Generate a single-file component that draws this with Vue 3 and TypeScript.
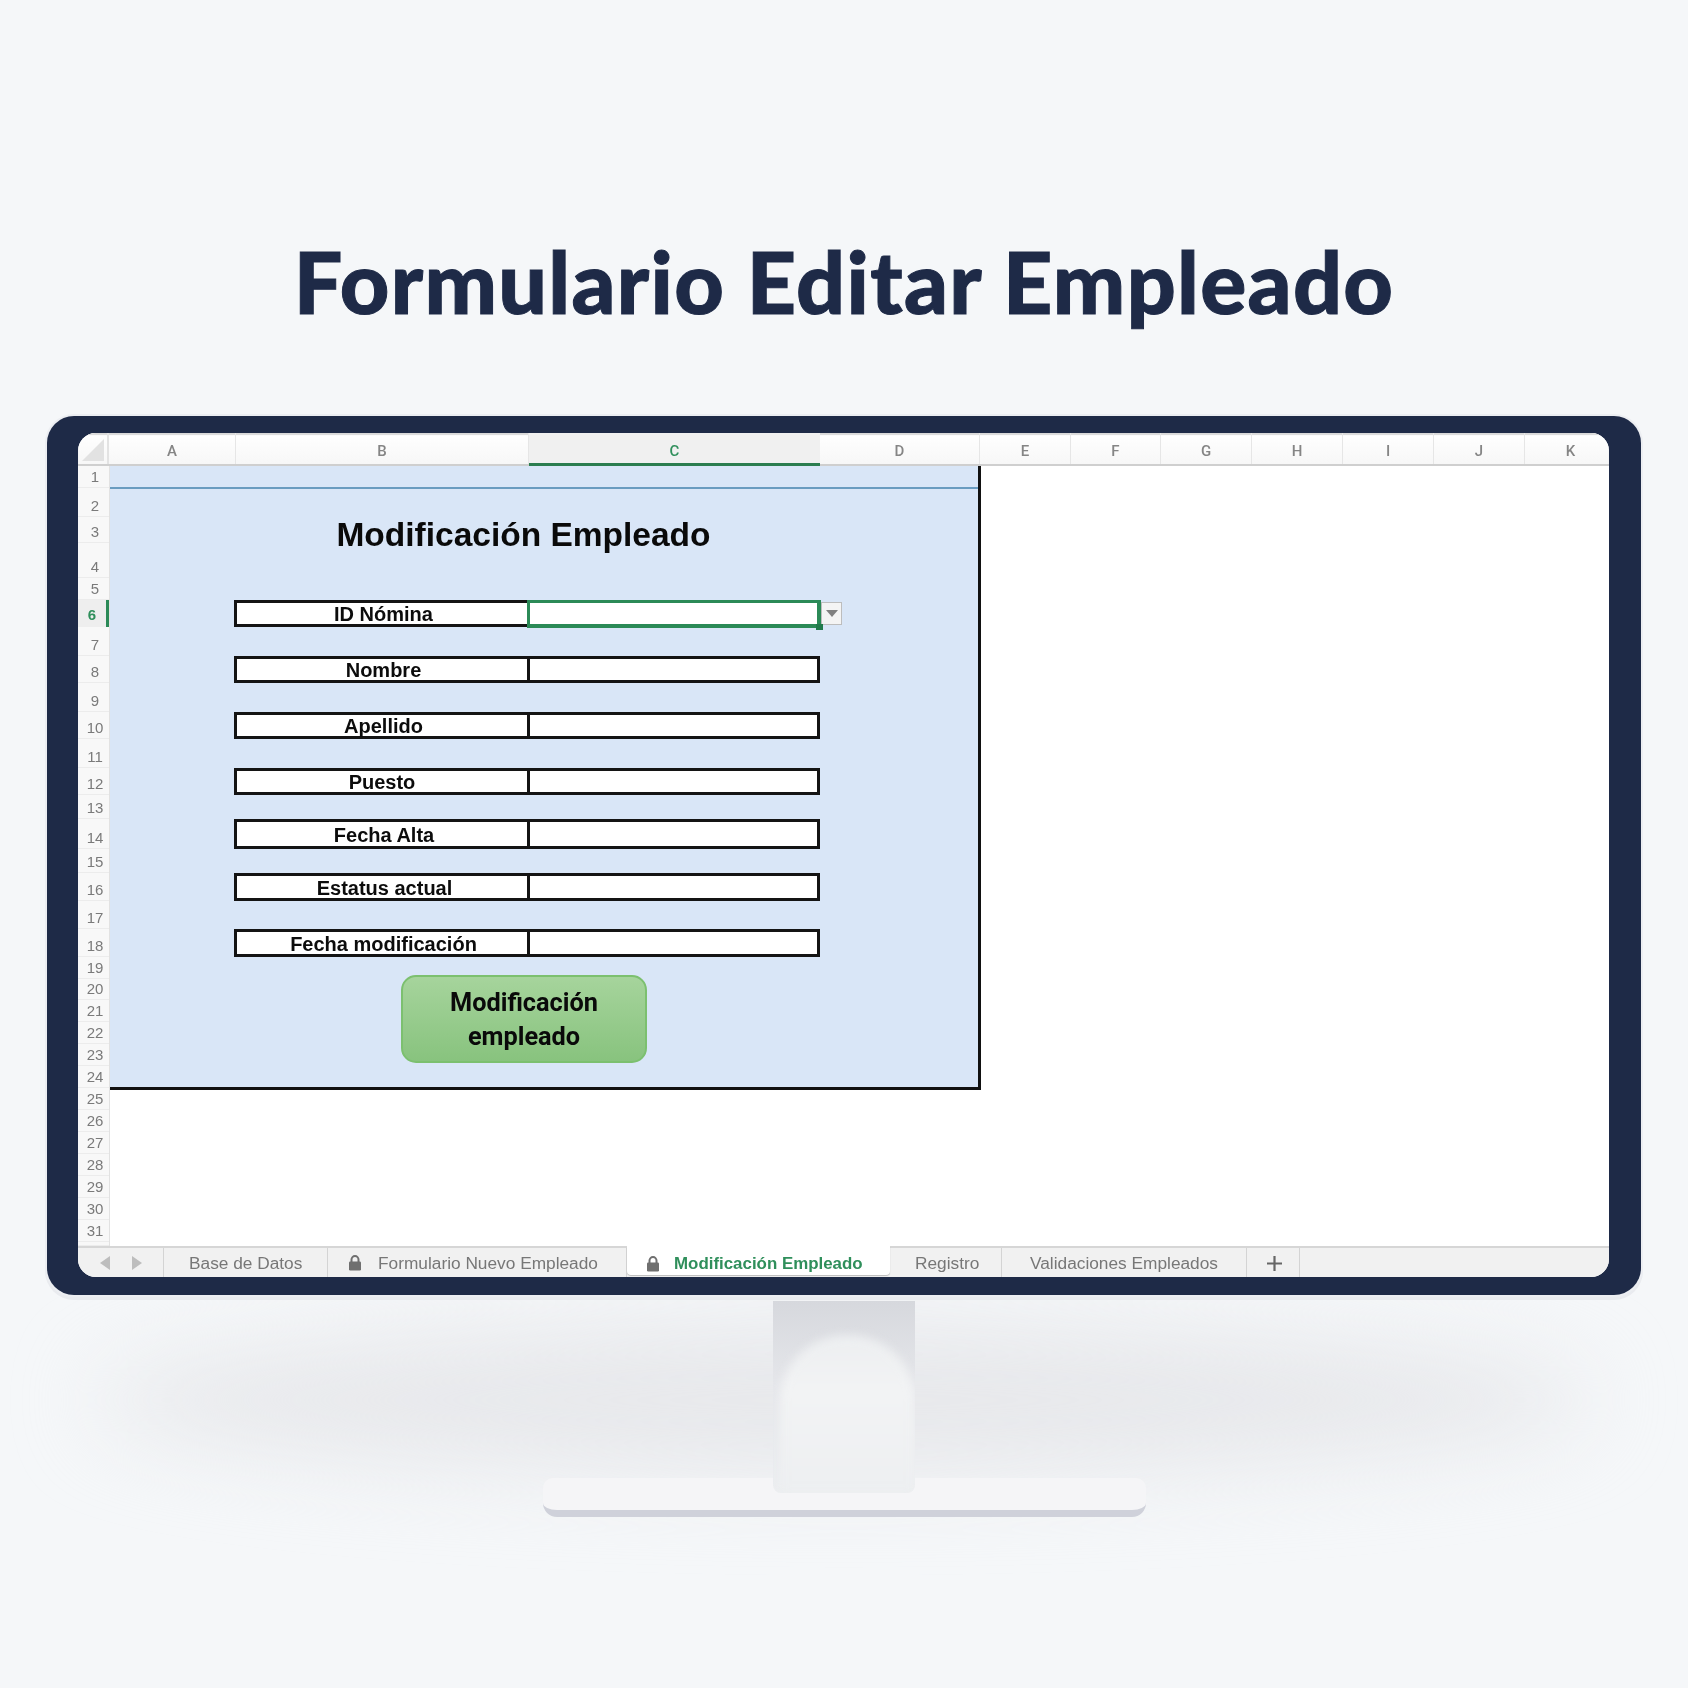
<script setup lang="ts">
interface Col { name: string; w: number; active?: boolean }
const cols: Col[] = [
  { name: 'A', w: 127 }, { name: 'B', w: 293 }, { name: 'C', w: 291, active: true },
  { name: 'D', w: 160 }, { name: 'E', w: 91 }, { name: 'F', w: 90 }, { name: 'G', w: 91 },
  { name: 'H', w: 91 }, { name: 'I', w: 91 }, { name: 'J', w: 91 }, { name: 'K', w: 84 }
]
const rowHeights = [22, 29, 26, 35, 22, 27, 29, 27, 29, 27, 29, 27, 24, 30, 24, 28, 28, 28, 22, 21, 22, 22, 22, 22, 22, 22, 22, 22, 22, 22, 22, 4]
const rows = rowHeights.map((h, i) => ({ n: i + 1, h, label: i < 31 ? String(i + 1) : '' }))
const fields = [
  { label: 'ID Nómina', h: 27, gap: 0, pad: 3, selected: true },
  { label: 'Nombre', h: 27, gap: 29, pad: 3 },
  { label: 'Apellido', h: 27, gap: 29, pad: 3 },
  { label: 'Puesto', h: 27, gap: 29, pad: 0 },
  { label: 'Fecha Alta', h: 30, gap: 24, pad: 4 },
  { label: 'Estatus actual', h: 28, gap: 24, pad: 5 },
  { label: 'Fecha modificación', h: 28, gap: 28, pad: 3 }
]
const tabs = [
  { name: 'Base de Datos', w: 164, lock: false, pad: 25 },
  { name: 'Formulario Nuevo Empleado', w: 299, lock: true, pad: 20 },
  { name: 'Modificación Empleado', w: 263, lock: true, pad: 19, active: true },
  { name: 'Registro', w: 112, lock: false, pad: 25 },
  { name: 'Validaciones Empleados', w: 245, lock: false, pad: 28 }
]
</script>

<template>
  <main class="page">
    <h1 class="headline">Formulario Editar Empleado</h1>

    <section class="monitor">
      <div class="frame">
        <div class="screen">
          <div class="col-head">
            <div class="corner"><span class="corner-tri"></span></div>
            <div
              v-for="c in cols"
              :key="c.name"
              class="col"
              :class="{ 'col-active': c.active }"
              :style="{ width: c.w + 'px' }"
            >{{ c.name }}</div>
          </div>

          <div class="sheet">
            <div class="row-head">
              <div
                v-for="r in rows"
                :key="r.n"
                class="row-num"
                :class="{ 'row-active': r.n === 6 }"
                :style="{ height: r.h + 'px' }"
              >{{ r.label }}</div>
            </div>

            <div class="cells">
              <div class="panel">
                <div class="panel-line"></div>
                <h2 class="form-title">Modificación Empleado</h2>
                <div
                  v-for="f in fields"
                  :key="f.label"
                  class="field"
                  :class="{ 'field-selected': f.selected }"
                  :style="{ height: f.h + 'px', marginTop: f.gap + 'px' }"
                >
                  <div class="field-label" :style="{ paddingLeft: f.pad + 'px' }">{{ f.label }}</div>
                  <div class="field-input">
                    <template v-if="f.selected">
                      <span class="cell-frame"></span>
                      <span class="handle"></span>
                      <span class="dropdown"><span class="dropdown-tri"></span></span>
                    </template>
                  </div>
                </div>
                <button class="submit" type="button">Modificación<br />empleado</button>
              </div>
            </div>
          </div>

          <div class="tabbar">
            <div class="nav">
              <svg width="10" height="14" viewBox="0 0 10 14"><path d="M10 0v14L0 7z" fill="#bdbdbd" /></svg>
              <svg width="10" height="14" viewBox="0 0 10 14"><path d="M0 0v14l10-7z" fill="#bdbdbd" /></svg>
            </div>
            <div
              v-for="t in tabs"
              :key="t.name"
              class="tab"
              :class="{ 'tab-active': t.active }"
              :style="{ width: t.w + 'px', paddingLeft: t.pad + 'px' }"
            >
              <svg v-if="t.lock" class="lock" width="14" height="16" viewBox="0 0 14 16">
                <path d="M3.5 7V4.6a3.5 3.5 0 0 1 7 0V7" fill="none" stroke="#6f6f6f" stroke-width="2" />
                <rect x="1" y="6.5" width="12" height="9" rx="1.2" fill="#6f6f6f" />
              </svg>
              <span>{{ t.name }}</span>
            </div>
            <div class="tab tab-plus">
              <svg width="15" height="15" viewBox="0 0 15 15"><path d="M7.5 0v15M0 7.5h15" stroke="#666" stroke-width="2.2" fill="none" /></svg>
            </div>
          </div>
        </div>
      </div>

      <div class="stand">
        <div class="stand-shadow"></div>
        <div class="neck"><div class="neck-light"></div></div>
        <div class="base"></div>
      </div>
    </section>
  </main>
</template>

<style>
html, body { margin: 0; background: #f5f7f9; }
</style>

<style scoped>
.page {
  width: 1688px;
  height: 1688px;
  background: #f5f7f9;
  overflow: hidden;
  display: flex;
  flex-direction: column;
  align-items: center;
}
.headline {
  margin: 226px 0 0;
  height: 190px;
  font-family: Lato, "Liberation Sans", sans-serif;
  font-weight: 900;
  font-size: 86px;
  line-height: 110px;
  letter-spacing: 1.3px;
  color: #1e2a47;
  white-space: nowrap;
  -webkit-text-stroke: 1px #1e2a47;
}
.monitor {
  width: 1594px;
  display: flex;
  flex-direction: column;
  align-items: center;
}
.frame {
  position: relative;
  z-index: 2;
  width: 1594px;
  box-sizing: border-box;
  padding: 17px 32px 18px 31px;
  background: #1e2a47;
  border-radius: 27px;
  box-shadow: 0 0 0 2px #eceef2, 0 3px 0 2px #e9ebef;
}
.screen {
  background: #fff;
  border-radius: 18px;
  overflow: hidden;
  height: 844px;
  display: flex;
  flex-direction: column;
  font-family: "Liberation Sans", Arial, sans-serif;
  filter: blur(0.5px);
}
.col-head {
  display: flex;
  height: 33px;
  box-sizing: border-box;
  background: linear-gradient(#ffffff, #f7f7f7);
  border-bottom: 2px solid #cfcfcf;
  box-shadow: inset 0 2px 1px #d8d8d8;
}
.corner {
  width: 31px;
  flex: none;
  box-sizing: border-box;
  border-right: 2px solid #e3e3e3;
  display: flex;
  align-items: flex-end;
  justify-content: flex-end;
  padding: 0 3px 3px 0;
}
.corner-tri {
  width: 0;
  height: 0;
  border-left: 22px solid transparent;
  border-bottom: 22px solid #e2e2e2;
}
.col {
  flex: none;
  box-sizing: border-box;
  border-right: 1px solid #e6e6e6;
  text-align: center;
  font-family: Roboto, sans-serif;
  font-weight: 500;
  font-size: 15px;
  line-height: 36px;
  color: #858585;
}
.col:last-child {
  padding-left: 7px;
  border-right: 0;
}
.col-active {
  background: #f0f0f0;
  color: #2f8f5b;
  border-bottom: 3px solid #2b7d4f;
  border-right: 0;
  height: 33px;
}
.sheet {
  flex: 1;
  display: flex;
  min-height: 0;
}
.row-head {
  width: 31px;
  flex: none;
  background: #f8f8f8;
  border-right: 1px solid #e2e2e2;
}
.row-num {
  box-sizing: border-box;
  border-bottom: 1px solid #ececec;
  display: flex;
  align-items: flex-end;
  justify-content: center;
  padding: 0 0 2px 3px;
  font-size: 15px;
  line-height: 17px;
  color: #7a7a7a;
}
.row-active {
  background: #eeeeee;
  color: #2f8f5b;
  font-weight: 700;
  border-right: 3px solid #2b8a57;
  border-bottom: 0;
  padding: 0 0 4px 0;
}
.cells {
  flex: 1;
  background: #fff;
}
.panel {
  width: 871px;
  height: 624px;
  box-sizing: border-box;
  background: #d9e6f7;
  border-right: 3px solid #111;
  border-bottom: 3px solid #111;
  padding: 21px 0 0 0;
}
.panel-line {
  height: 2px;
  background: #6a9cc0;
}
.form-title {
  margin: 26px 0 46px 0;
  width: 827px;
  text-align: center;
  font-size: 33.5px;
  line-height: 39px;
  font-weight: 700;
  color: #0a0a0a;
}
.field {
  display: flex;
  width: 586px;
  margin-left: 124px;
  box-sizing: border-box;
  border: 3px solid #141414;
  background: #fff;
}
.field-selected {
  border-right-color: #2b8a57;
}
.field-label {
  width: 293px;
  flex: none;
  box-sizing: border-box;
  border-right: 3px solid #141414;
  padding-top: 2px;
  display: flex;
  align-items: center;
  justify-content: center;
  font-size: 20px;
  font-weight: 700;
  color: #0c0c0c;
}
.field-input {
  flex: 1;
  position: relative;
}
.cell-frame {
  position: absolute;
  z-index: 1;
  left: -3px;
  top: -3px;
  right: -4px;
  bottom: -4px;
  background: #fff;
  border: 3px solid #2b8a57;
  border-right-width: 4px;
  border-bottom-width: 4px;
}
.handle {
  position: absolute;
  z-index: 2;
  right: -6px;
  bottom: -6px;
  width: 7px;
  height: 6px;
  background: #217a4b;
}
.dropdown {
  position: absolute;
  left: calc(100% + 4px);
  top: -1px;
  width: 21px;
  height: 23px;
  box-sizing: border-box;
  border: 1px solid #bdbdbd;
  background: #f4f4f4;
  display: flex;
  align-items: center;
  justify-content: center;
}
.dropdown-tri {
  width: 0;
  height: 0;
  border-left: 6px solid transparent;
  border-right: 6px solid transparent;
  border-top: 7px solid #808080;
}
.submit {
  display: block;
  width: 246px;
  height: 88px;
  margin: 18px 0 0 291px;
  padding: 1px 0 0;
  box-sizing: border-box;
  border: 2px solid #7cc06f;
  border-radius: 15px;
  background: linear-gradient(#a6d49c, #88c37e);
  font-family: Roboto, sans-serif;
  font-weight: 700;
  font-size: 25.3px;
  line-height: 33.5px;
  color: #0a0a0a;
}
.tabbar {
  height: 31px;
  flex: none;
  display: flex;
  background: #f1f1f1;
  border-top: 2px solid #d6d6d6;
  box-sizing: border-box;
  font-size: 17.3px;
  color: #777;
}
.nav {
  width: 86px;
  flex: none;
  box-sizing: border-box;
  padding-left: 22px;
  display: flex;
  align-items: center;
  gap: 22px;
  border-right: 1px solid #d4d4d4;
}
.tab {
  flex: none;
  box-sizing: border-box;
  border-right: 1px solid #d4d4d4;
  display: flex;
  align-items: center;
  padding-top: 1px;
  white-space: nowrap;
}
.lock {
  margin-right: 16px;
}
.tab-active {
  background: #fff;
  color: #2f8f5b;
  font-weight: 700;
  border-right: 0;
  border-radius: 0 0 4px 4px;
  margin-top: -2px;
  height: 29px;
  padding-top: 6px;
  font-size: 16.9px;
  box-shadow: 0 1px 1px #bbb;
}
.tab-active .lock {
  margin-right: 14px;
}
.tab-plus {
  width: 53px;
  justify-content: center;
  padding-left: 3px;
}
.stand {
  position: relative;
  width: 100%;
  display: flex;
  flex-direction: column;
  align-items: center;
  padding-top: 6px;
}
.stand-shadow {
  position: absolute;
  left: 50px;
  right: 50px;
  top: 30px;
  height: 150px;
  background: #e7e8eb;
  border-radius: 50%;
  filter: blur(42px);
}
.neck {
  position: relative;
  z-index: 1;
  width: 142px;
  height: 192px;
  margin-bottom: -15px;
  background: linear-gradient(#d6d8dd, #e6e7eb 45%, #eceef0);
  border-radius: 0 0 8px 8px;
  display: flex;
  justify-content: flex-end;
  align-items: flex-end;
  overflow: hidden;
}
.neck-light {
  width: 135px;
  height: 158px;
  border-radius: 66px 66px 0 0;
  background: linear-gradient(#eceef0, #f2f3f4 35%, #edeff1);
  filter: blur(5px);
}
.base {
  position: relative;
  width: 603px;
  height: 39px;
  box-sizing: border-box;
  background: #f5f5f7;
  border-bottom: 7px solid #cfd1da;
  border-radius: 10px 10px 14px 14px;
}
</style>
